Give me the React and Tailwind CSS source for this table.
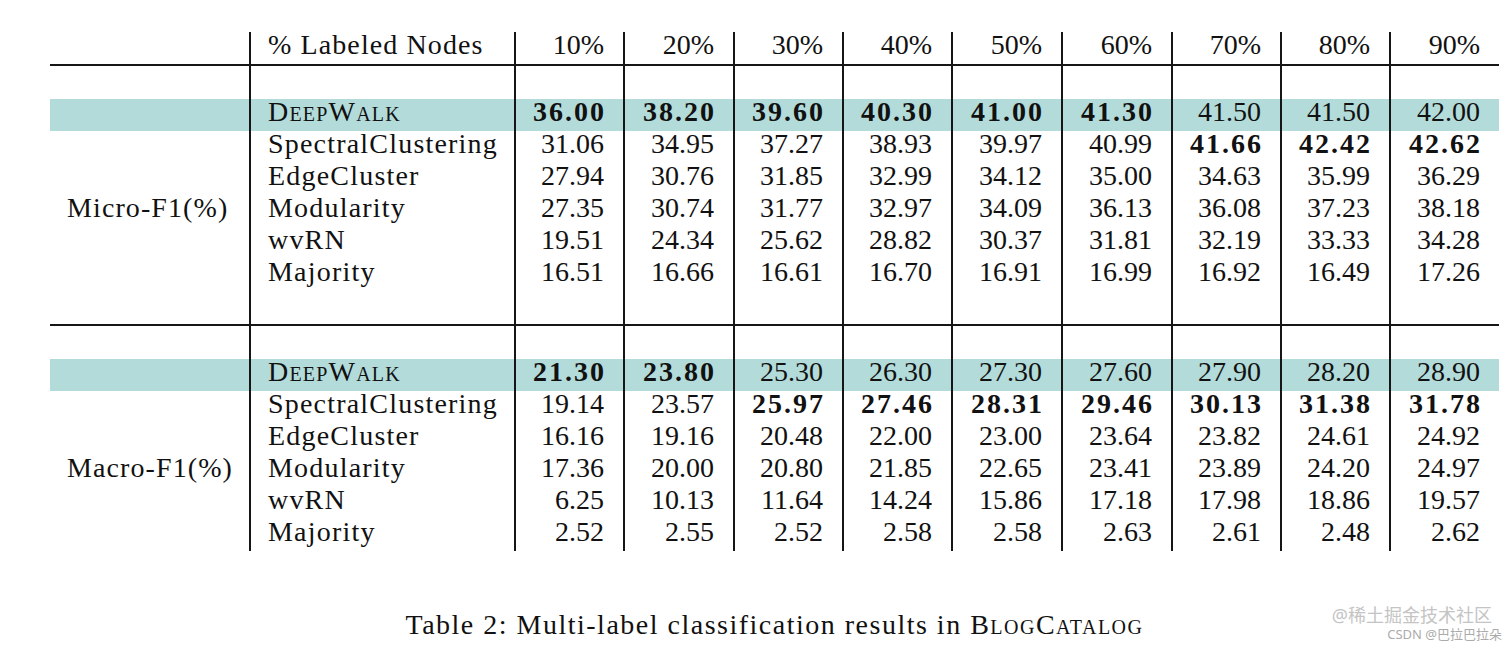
import React from 'react'

// column widths (px) for the nine percentage columns
const colWidths = [109, 110, 109, 109, 110, 110, 109, 109, 109]
const headers = ['10%', '20%', '30%', '40%', '50%', '60%', '70%', '80%', '90%']

const micro = [
    { name: 'DeepWalk', sc: true, vals: ['36.00', '38.20', '39.60', '40.30', '41.00', '41.30', '41.50', '41.50', '42.00'], bold: [0, 1, 2, 3, 4, 5] },
    { name: 'SpectralClustering', vals: ['31.06', '34.95', '37.27', '38.93', '39.97', '40.99', '41.66', '42.42', '42.62'], bold: [6, 7, 8] },
    { name: 'EdgeCluster', vals: ['27.94', '30.76', '31.85', '32.99', '34.12', '35.00', '34.63', '35.99', '36.29'], bold: [] },
    { name: 'Modularity', vals: ['27.35', '30.74', '31.77', '32.97', '34.09', '36.13', '36.08', '37.23', '38.18'], bold: [], label: 'Micro-F1(%)' },
    { name: 'wvRN', vals: ['19.51', '24.34', '25.62', '28.82', '30.37', '31.81', '32.19', '33.33', '34.28'], bold: [] },
    { name: 'Majority', vals: ['16.51', '16.66', '16.61', '16.70', '16.91', '16.99', '16.92', '16.49', '17.26'], bold: [] },
]

const macro = [
    { name: 'DeepWalk', sc: true, vals: ['21.30', '23.80', '25.30', '26.30', '27.30', '27.60', '27.90', '28.20', '28.90'], bold: [0, 1] },
    { name: 'SpectralClustering', vals: ['19.14', '23.57', '25.97', '27.46', '28.31', '29.46', '30.13', '31.38', '31.78'], bold: [2, 3, 4, 5, 6, 7, 8] },
    { name: 'EdgeCluster', vals: ['16.16', '19.16', '20.48', '22.00', '23.00', '23.64', '23.82', '24.61', '24.92'], bold: [] },
    { name: 'Modularity', vals: ['17.36', '20.00', '20.80', '21.85', '22.65', '23.41', '23.89', '24.20', '24.97'], bold: [], label: 'Macro-F1(%)' },
    { name: 'wvRN', vals: ['6.25', '10.13', '11.64', '14.24', '15.86', '17.18', '17.98', '18.86', '19.57'], bold: [] },
    { name: 'Majority', vals: ['2.52', '2.55', '2.52', '2.58', '2.58', '2.63', '2.61', '2.48', '2.62'], bold: [] },
]

const line = 'border-r-2 border-r-[#161616]'
// text sits a little high in the row, like the LaTeX original
const cell = 'pb-[6px] leading-[26px] align-middle'

function SmallCaps({ text }) {
    return <span className="[font-variant:small-caps]">{text}</span>
}

function SpacerRow({ bottom }) {
    return (
        <tr className={bottom ? 'h-[34px] border-b-2 border-b-[#161616]' : 'h-[34px]'}>
            <td className={line}></td>
            <td className={line}></td>
            {headers.map((h, i) => (
                <td key={i} className={i < 8 ? line : ''}></td>
            ))}
        </tr>
    )
}

function DataRow({ row }) {
    return (
        <tr className={row.sc ? 'h-[32px] bg-[#b2dbd9]' : 'h-[32px]'}>
            <td className={`${line} ${cell} pl-[17px] tracking-[1.1px] whitespace-nowrap`}>{row.label}</td>
            <td className={`${line} ${cell} pl-[17px] tracking-[1.2px] whitespace-nowrap`}>
                {row.sc ? <SmallCaps text={row.name} /> : row.name}
            </td>
            {row.vals.map((v, i) => (
                <td key={i} className={`${i < 8 ? line : ''} ${cell} text-right pr-[19px]`}>
                    {row.bold.includes(i)
                        ? <span className="font-bold tracking-[2px] -mr-[2px]">{v}</span>
                        : v}
                </td>
            ))}
        </tr>
    )
}

export default function App() {
    return (
        <div className="relative w-[1512px] h-[646px] bg-white overflow-hidden font-['Liberation_Serif',serif] text-[28px] leading-[32px] text-[#111]">
            <div className="ml-[50px] pt-[32px] w-[1449px]">
                <table className="table-fixed border-collapse w-[1449px]">
                    <colgroup>
                        <col className="w-[200px]" />
                        <col className="w-[265px]" />
                        {colWidths.map((w, i) => (
                            <col key={i} style={{ width: w }} />
                        ))}
                    </colgroup>
                    <tbody>
                        <tr className="h-[32px] border-b-2 border-b-[#161616]">
                            <td className={line}></td>
                            <td className={`${line} ${cell} pl-[17px] tracking-[1.1px] whitespace-nowrap`}>% Labeled Nodes</td>
                            {headers.map((h, i) => (
                                <td key={i} className={`${i < 8 ? line : ''} ${cell} text-right pr-[19px]`}>{h}</td>
                            ))}
                        </tr>
                        <SpacerRow />
                        {micro.map((r, i) => <DataRow key={i} row={r} />)}
                        <SpacerRow bottom />
                        <SpacerRow />
                        {macro.map((r, i) => <DataRow key={i} row={r} />)}
                    </tbody>
                </table>
                <p className="mt-[58px] text-center tracking-[1.5px]">
                    Table 2: Multi-label classification results in <SmallCaps text="BlogCatalog" />
                </p>
            </div>
            {/* watermark */}
            <div className="absolute right-[10px] bottom-[5px] flex flex-col items-end font-['Noto_Sans','Noto_Sans_CJK_SC',sans-serif] leading-none">
                <span className="text-[18px] text-[#c4c4c4] mr-[10px]">@稀土掘金技术社区</span>
                <span className="text-[13px] text-[#ababab] mt-[4px]">CSDN @巴拉巴拉朵</span>
            </div>
        </div>
    )
}
